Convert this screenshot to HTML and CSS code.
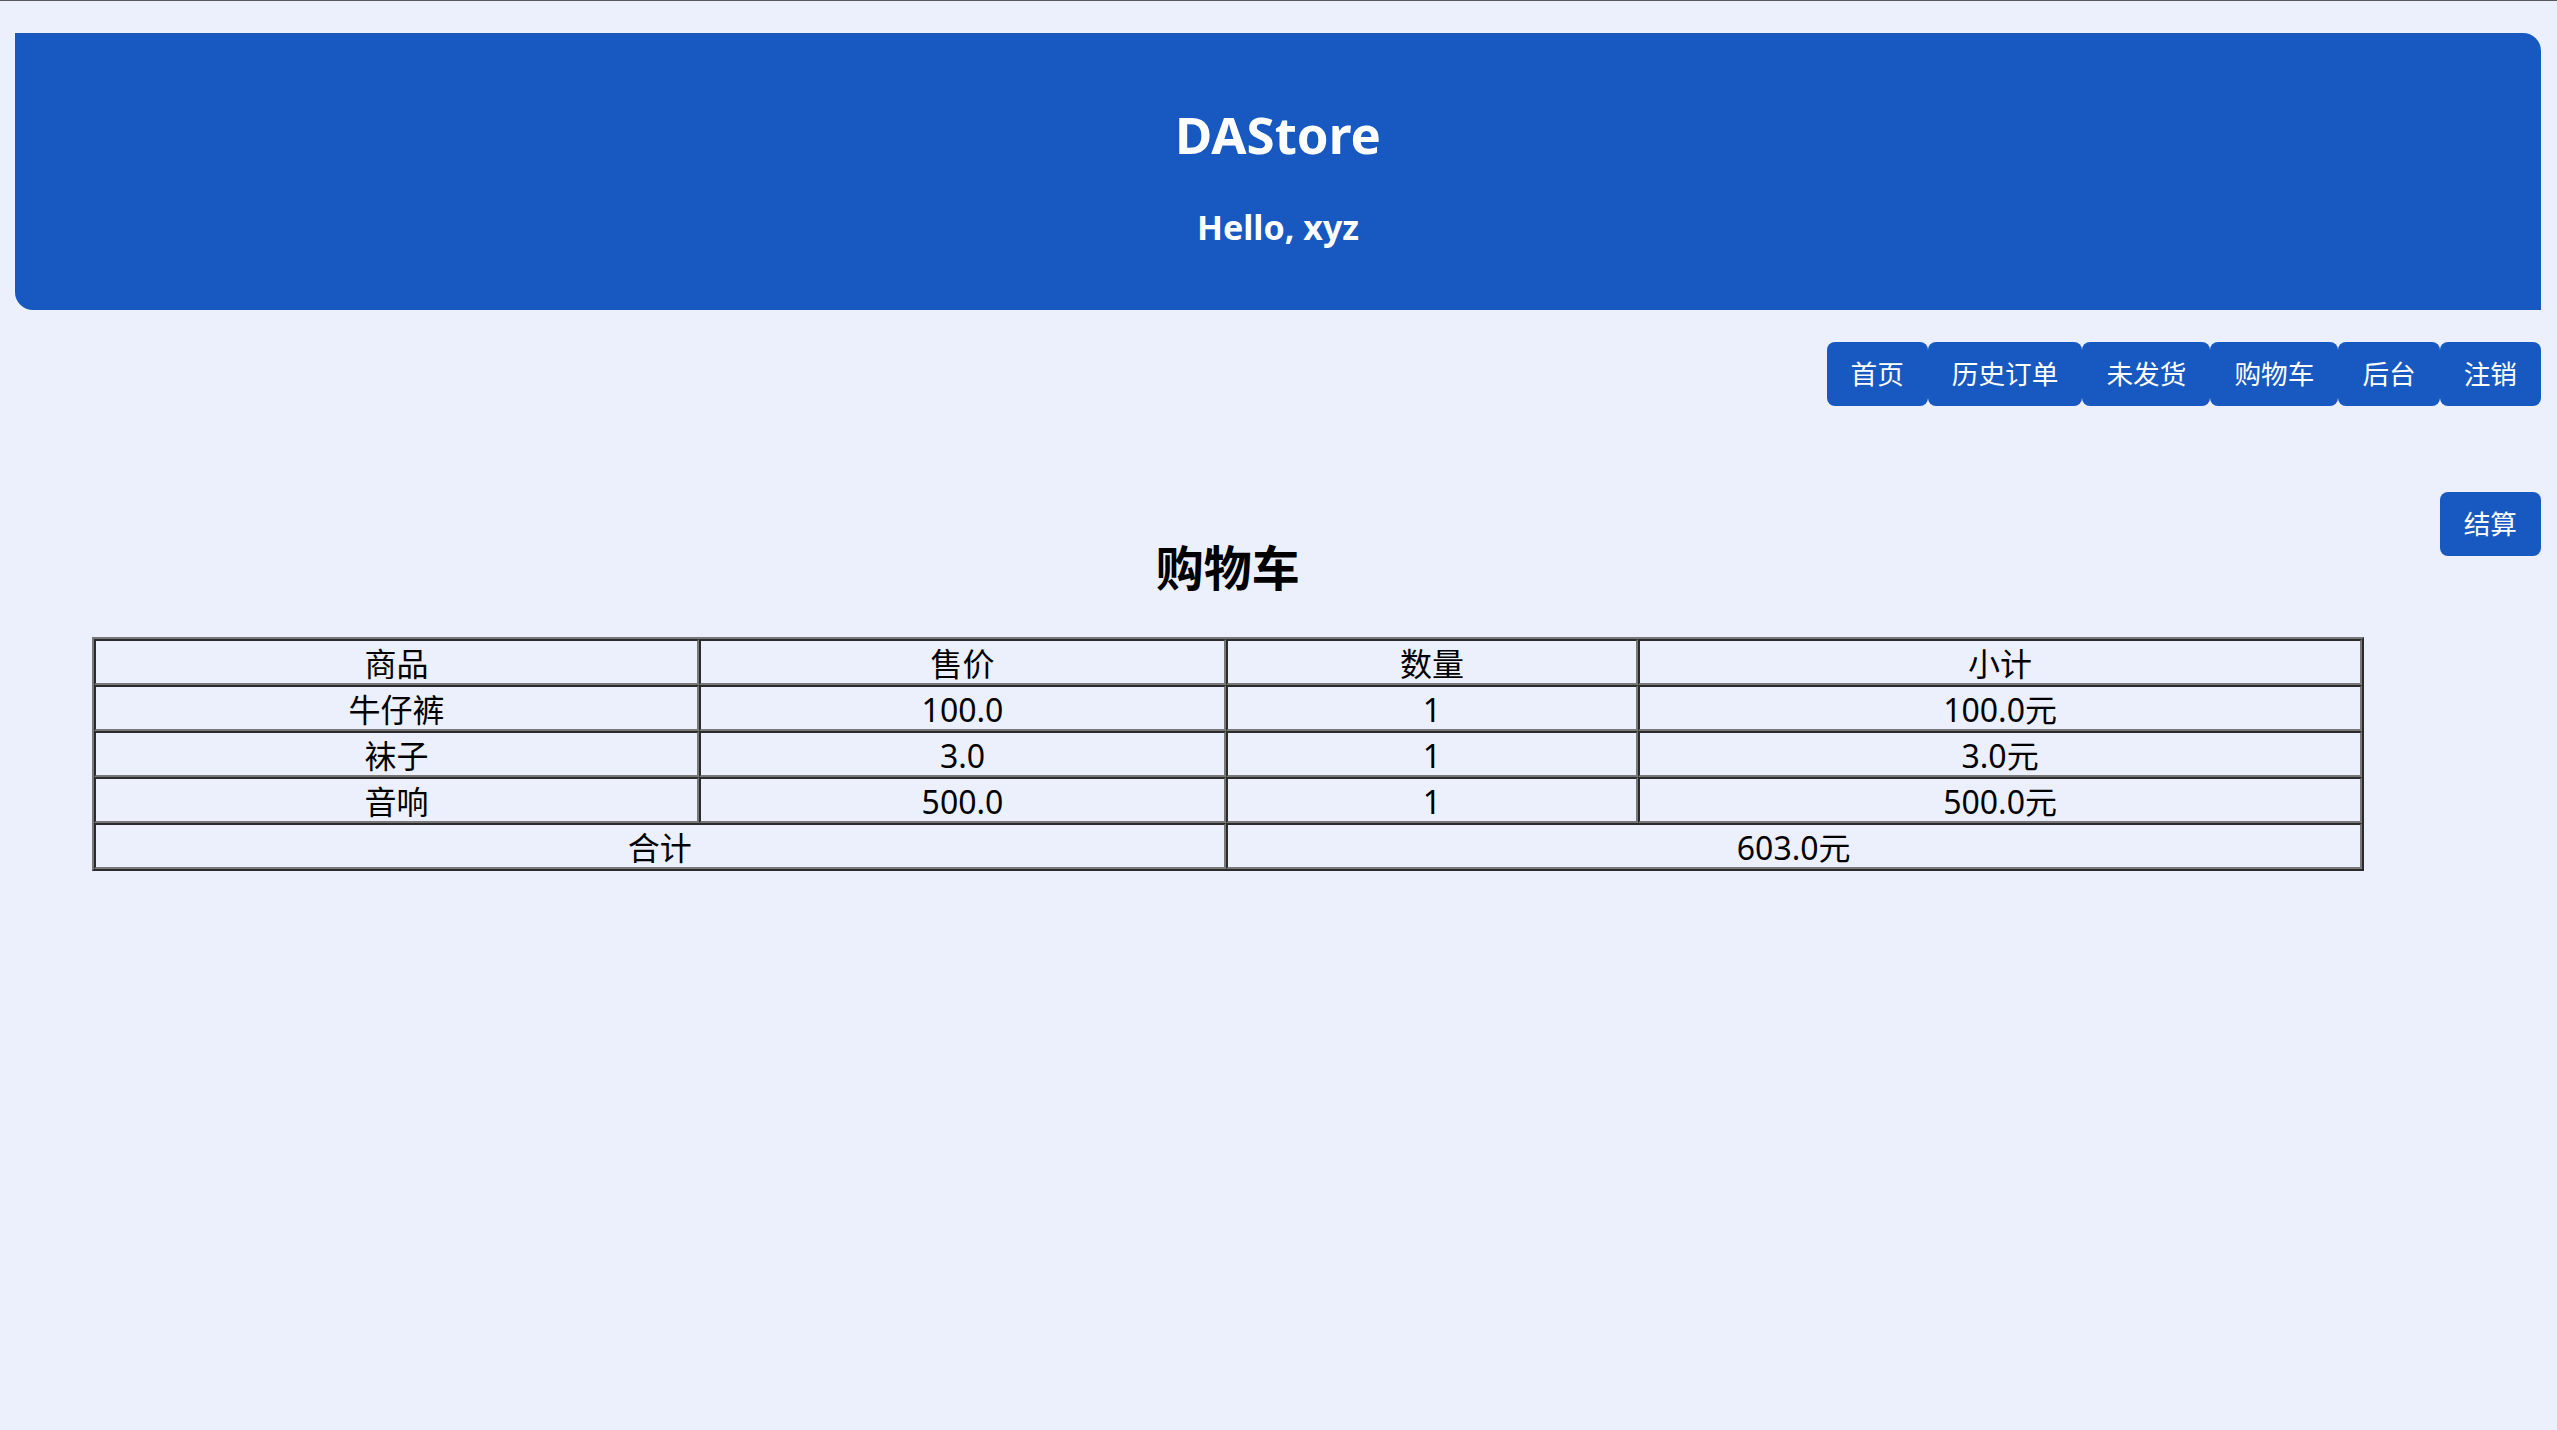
FILE: index.html
```html
<!DOCTYPE html>
<html lang="zh-CN">
<head>
<meta charset="utf-8">
<title>DAStore - 购物车</title>
<link rel="stylesheet" href="styles.css">
</head>
<body>
  <header class="site-header">
    <h1 class="site-title">DAStore</h1>
    <h4 class="greeting">Hello, xyz</h4>
  </header>

  <nav class="nav">
    <button class="btn">首页</button>
    <button class="btn">历史订单</button>
    <button class="btn">未发货</button>
    <button class="btn">购物车</button>
    <button class="btn">后台</button>
    <button class="btn">注销</button>
  </nav>

  <div class="content">
    <main class="main">
      <h2 class="page-title">购物车</h2>
      <table class="cart">
        <colgroup>
          <col class="c-name">
          <col class="c-price">
          <col class="c-qty">
          <col class="c-sub">
        </colgroup>
        <tr><td>商品</td><td>售价</td><td>数量</td><td>小计</td></tr>
        <tr><td>牛仔裤</td><td>100.0</td><td>1</td><td>100.0元</td></tr>
        <tr><td>袜子</td><td>3.0</td><td>1</td><td>3.0元</td></tr>
        <tr><td>音响</td><td>500.0</td><td>1</td><td>500.0元</td></tr>
        <tr><td colspan="2">合计</td><td colspan="2">603.0元</td></tr>
      </table>
    </main>
    <aside class="aside">
      <button class="btn">结算</button>
    </aside>
  </div>
</body>
</html>
```

FILE: styles.css
```css
html, body {
  margin: 0;
  padding: 0;
}

body {
  background: #ecf0fc;
  border-top: 1px solid #5a5a5a;
  font-family: "Noto Sans", "Noto Sans CJK SC", sans-serif;
  color: #000;
  min-height: 1429px;
}

.site-header {
  margin: 32px 16px 0 15px;
  background: #1759c0;
  color: #fff;
  border-radius: 0 18px 0 18px;
  padding: 71px 0 63px;
  display: flex;
  flex-direction: column;
  align-items: center;
}

.site-title {
  margin: 0;
  font-size: 51px;
  line-height: 60px;
  font-weight: 700;
}

.greeting {
  margin: 43px 0 0;
  font-size: 34px;
  line-height: 40px;
  font-weight: 700;
}

.nav {
  display: flex;
  justify-content: flex-end;
  margin: 32px 16px 0;
}

.btn {
  font-family: "Noto Sans CJK SC", sans-serif;
  font-size: 26.67px;
  line-height: 32px;
  padding: 15px 24px 17px;
  border: 0;
  border-radius: 8px;
  background: #1759c0;
  color: #fff;
  margin: 0;
}

.content {
  display: flex;
  align-items: flex-start;
  margin: 86px 16px 0;
}

.main {
  flex: 1;
  min-width: 0;
}

.aside {
  flex: none;
}

.page-title {
  margin: 38px 0 37px;
  text-align: center;
  font-family: "Noto Sans CJK SC", sans-serif;
  font-size: 48px;
  line-height: 70px;
  font-weight: 700;
}

.cart {
  width: 2272px;
  margin: 0 auto;
  table-layout: fixed;
  border-collapse: separate;
  border-spacing: 0;
  border: 2px solid;
  border-color: #787878 #2b2b2b #2b2b2b #787878;
  font-size: 32px;
}

.c-name { width: 26.7%; }
.c-price { width: 23.2%; }
.c-qty { width: 18.2%; }
.c-sub { width: 31.9%; }

.cart td {
  border: 2px solid;
  border-color: #2b2b2b #787878 #787878 #2b2b2b;
  padding: 4px 0 0;
  line-height: 38px;
  text-align: center;
  white-space: nowrap;
}
```
